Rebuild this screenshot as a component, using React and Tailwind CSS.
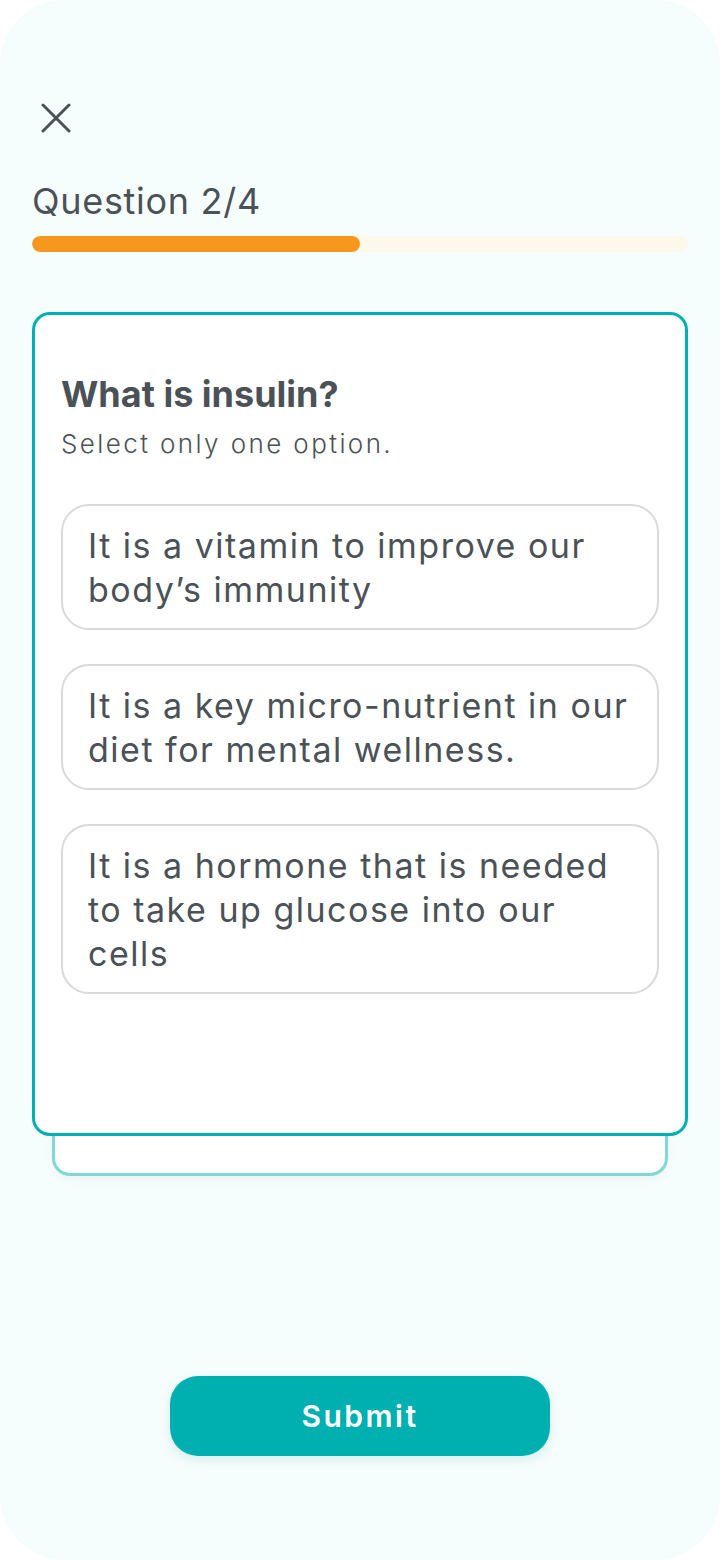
import React, { useState } from 'react';

const options = [
  'It is a vitamin to improve our body’s immunity',
  'It is a key micro-nutrient in our diet for mental wellness.',
  'It is a hormone that is needed to take up glucose into our cells',
];

const App = () => {
  const [selected, setSelected] = useState(null);
  const current = 2;
  const total = 4;

  return (
    <div className="w-[720px] h-[1560px] bg-white font-['Inter','Noto_Sans',sans-serif] text-[#4b5257]">
      <div className="h-full rounded-[64px] bg-[#f6fdfd] px-8 flex flex-col">
        {/* close */}
        <button className="mt-[103px] ml-[9px] w-[30px] h-[30px] text-[#4b5257]">
          <svg width="30" height="30" viewBox="0 0 30 30" fill="none" stroke="currentColor" strokeWidth="3" strokeLinecap="round">
            <path d="M2 2 L28 28 M28 2 L2 28" />
          </svg>
        </button>

        <div className="mt-[48px] text-[36px] leading-[40px] font-normal tracking-[0.7px]">
          Question {current}/{total}
        </div>

        <div className="mt-[15px] h-4 rounded-full bg-[#fdf9ea] overflow-hidden">
          <div className="h-full rounded-full bg-[#f7971e]" style={{ width: `${(current / total) * 100}%` }} />
        </div>

        <div className="mt-[60px] flex flex-col">
          <div className="relative z-10 h-[824px] rounded-[18px] border-[3px] border-[#00b0b0] bg-white px-[26px] pt-[57px]">
            <h2 className="text-[36px] leading-[44px] font-bold">What is insulin?</h2>
            <p className="mt-[12px] text-[26px] leading-[32px] font-light tracking-[2.4px]">Select only one option.</p>

            <div className="mt-[44px] flex flex-col gap-[34px]">
              {options.map((opt, i) => (
                <button
                  key={i}
                  onClick={() => setSelected(i)}
                  className={`text-left rounded-[28px] border-2 px-[25px] pt-[18px] pb-[16px] text-[34px] leading-[44px] tracking-[1.5px] ${
                    selected === i ? 'border-[#00b0b0]' : 'border-[#d9d9d9]'
                  }`}
                >
                  {opt}
                </button>
              ))}
            </div>
          </div>
          <div className="mx-5 -mt-5 h-[60px] rounded-b-[18px] border-[3px] border-t-0 border-[#80d7d7] bg-white shadow-[0_4px_10px_rgba(0,0,0,0.04)]" />
        </div>

        <button className="mt-[200px] mx-auto w-[380px] h-[80px] rounded-[28px] bg-[#00b0b0] text-white text-[30px] font-semibold tracking-[2.5px] shadow-[0_4px_12px_rgba(0,120,120,0.12)]">
          Submit
        </button>
      </div>
    </div>
  );
};

export default App;
